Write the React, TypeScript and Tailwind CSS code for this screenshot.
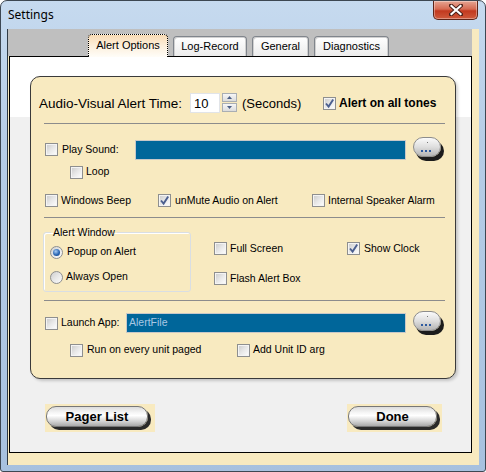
import React from "react";

function Box({ checked = false }: { checked?: boolean }) {
  return (
    <span className="flex h-[13px] w-[13px] shrink-0 items-center justify-center border border-[#8e8f8f] bg-[#f4f4f4] p-[1px]">
      <span className="relative flex h-full w-full items-center justify-center bg-gradient-to-br from-[#cfcfcf] via-[#e8e8e8] to-[#fbfbfb]">
        {checked && (
          <svg width="11" height="11" viewBox="0 0 11 11" className="absolute left-[-1px] top-[-1px]">
            <path d="M2 5.5 L4.6 8.6 L9.2 1.6" stroke="#4b5f8f" strokeWidth="1.9" fill="none" />
          </svg>
        )}
      </span>
    </span>
  );
}

function Radio({ on = false }: { on?: boolean }) {
  return (
    <span className="flex h-[13px] w-[13px] shrink-0 items-center justify-center rounded-full border border-[#8e8f8f] bg-gradient-to-br from-[#cfcfcf] via-[#e8e8e8] to-[#fbfbfb]">
      {on && (
        <span className="h-[7px] w-[7px] rounded-full bg-[radial-gradient(circle_at_40%_35%,#a8cdf5_0%,#2a66b4_55%,#0f3c78_100%)]" />
      )}
    </span>
  );
}

function Ellip() {
  return (
    <div className="h-[25px] w-[33px] shrink-0">
      <div className="relative h-[20px] w-[28px] rounded-[10px] border border-[#8c8c8c] bg-gradient-to-b from-[#fafafa] via-[#dedede] to-[#b4b4b4] shadow-[3px_4px_0_#1c1c1c]">
        <span className="absolute left-[13px] top-[4px] h-[1px] w-[1px] bg-[#777]" />
        <div className="absolute bottom-[4px] left-[7px] flex gap-[2px]">
          <span className="h-[2px] w-[2px] bg-[#2d5aa0]" />
          <span className="h-[2px] w-[2px] bg-[#2d5aa0]" />
          <span className="h-[2px] w-[2px] bg-[#2d5aa0]" />
        </div>
      </div>
    </div>
  );
}

function BigBtn({ label, w, face }: { label: string; w: string; face: string }) {
  return (
    <div className={`${w} h-[28px] bg-[#f8eac0] pl-[1px] pt-[2px]`}>
      <div
        className={`${face} flex h-[21px] items-center justify-center rounded-[10px] border border-[#777] bg-[linear-gradient(180deg,#dcdcdc_0%,#f6f6f6_30%,#ffffff_45%,#d4d4d4_75%,#a9a9a9_100%)] text-[13px] font-bold text-black shadow-[3px_3px_0_#2a2a2a]`}
      >
        {label}
      </div>
    </div>
  );
}

function Tab({ label, sel = false, w }: { label: string; sel?: boolean; w: string }) {
  if (sel) {
    return (
      <div
        className={`${w} relative z-10 mb-[-1px] flex h-[23px] items-start justify-center rounded-t-[4px] border border-b-0 border-dotted border-black bg-gradient-to-b from-[#f9dbb4] via-[#fcefdc] to-[#fffdf8] pt-[4px] text-[11px] leading-[13px]`}
      >
        {label}
      </div>
    );
  }
  return (
    <div
      className={`${w} flex h-[20px] items-start justify-center rounded-t-[4px] border border-b-0 border-[#80858c] bg-gradient-to-b from-[#ffffff] to-[#ececec] pt-[3px] text-[11px] leading-[13px] shadow-[inset_1px_1px_0_#d0d0d0,inset_-1px_0_0_#d0d0d0]`}
    >
      {label}
    </div>
  );
}

export default function App() {
  return (
    <div className="relative h-[472px] w-[486px] overflow-hidden rounded-t-[7px] rounded-b-[3px] border border-[#3d4752] bg-[linear-gradient(180deg,#c6daef_0%,#b6cde7_30%,#aec7e3_70%,#a7c1df_100%)] font-['Liberation_Sans',Arial,sans-serif] text-black">
      {/* title bar */}
      <div className="flex h-[28px] items-start justify-between">
        <span className="ml-[7px] mt-[6px] font-['Noto_Sans',sans-serif] text-[12px] leading-[16px] text-black">
          Settings
        </span>
        <div className="mr-[7px] flex h-[19px] w-[45px] items-center justify-center rounded-b-[5px] border border-t-0 border-[#5e2418] bg-[linear-gradient(180deg,#e6a593_0%,#d66a52_45%,#c2391f_55%,#cf5a3c_100%)] shadow-[inset_0_0_0_1px_rgba(255,255,255,0.35)]">
          <svg width="14" height="12" viewBox="0 0 14 12">
            <path d="M2 1.5 L12 10.5 M12 1.5 L2 10.5" stroke="#4a2018" strokeWidth="4" strokeLinecap="square" />
            <path d="M2.5 2 L11.5 10 M11.5 2 L2.5 10" stroke="#ffffff" strokeWidth="2.2" strokeLinecap="square" />
          </svg>
        </div>
      </div>

      {/* client area */}
      <div className="ml-[6px] flex h-[436px] w-[472px] flex-col border-l border-[#2f3a45] bg-[#f8eac0]">
        {/* tab strip */}
        <div className="flex h-[27px] w-[464px] items-end bg-[#bfbfbf] pl-[80px]">
          <Tab label="Alert Options" sel w="w-[80px]" />
          <div className="w-[5px]" />
          <Tab label="Log-Record" w="w-[74px]" />
          <div className="w-[5px]" />
          <Tab label="General" w="w-[57px]" />
          <div className="w-[5px]" />
          <Tab label="Diagnostics" w="w-[75px]" />
        </div>

        {/* panel */}
        <div className="ml-[1px] flex h-[397px] w-[463px] flex-col border border-black bg-[linear-gradient(180deg,#ffffff_0px,#ffffff_60px,#f0f0f0_60px,#f0f0f0_100%)]">
          {/* yellow box */}
          <div className="ml-[20px] mt-[19px] flex h-[303px] w-[426px] flex-col rounded-[10px] border border-[#3a3a3a] bg-[#f8eac0] text-[10.5px] shadow-[2px_2px_3px_rgba(0,0,0,0.18)]">
            {/* row 1 */}
            <div className="mt-[16px] flex h-[20px] items-center pl-[8px]">
              <span className="w-[151px] text-[13.5px] leading-[15px]">Audio-Visual Alert Time:</span>
              <div className="flex h-[20px] w-[30px] items-center border border-[#e1e4e8] bg-white pl-[3px] text-[13px] leading-[15px]">
                10
              </div>
              <div className="ml-[2px] flex h-[20px] w-[15px] flex-col gap-[1px]">
                <div className="flex h-[9px] items-center justify-center border border-[#a9aeb3] bg-gradient-to-b from-[#f6f6f6] to-[#dcdcdc]">
                  <svg width="5" height="3" viewBox="0 0 5 3">
                    <path d="M0 3 L2.5 0 L5 3 Z" fill="#4c5f86" />
                  </svg>
                </div>
                <div className="flex h-[9px] items-center justify-center border border-[#a9aeb3] bg-gradient-to-b from-[#f6f6f6] to-[#dcdcdc]">
                  <svg width="5" height="3" viewBox="0 0 5 3">
                    <path d="M0 0 L2.5 3 L5 0 Z" fill="#4c5f86" />
                  </svg>
                </div>
              </div>
              <span className="ml-[5px] w-[76px] text-[13px] leading-[15px]">(Seconds)</span>
              <span className="ml-[5px]">
                <Box checked />
              </span>
              <span className="ml-[3px] text-[12px] font-bold leading-[14px]">Alert on all tones</span>
            </div>

            <div className="ml-[13px] mt-[10px] h-[1px] w-[401px] bg-[#8c8c8c]" />

            {/* play sound */}
            <div className="mt-[14px] flex h-[23px] items-center">
              <span className="ml-[14px]">
                <Box />
              </span>
              <span className="ml-[4px] w-[73px]">Play Sound:</span>
              <div className="h-[20px] w-[271px] border border-[#c8c8c8] bg-[#00669a]" />
              <div className="ml-[7px]">
                <Ellip />
              </div>
            </div>

            {/* loop */}
            <div className="mt-[1px] flex h-[20px] items-center">
              <span className="ml-[39px]">
                <Box />
              </span>
              <span className="ml-[3px]">Loop</span>
            </div>

            {/* beep row */}
            <div className="mt-[8px] flex h-[21px] items-center">
              <span className="ml-[14px]">
                <Box />
              </span>
              <span className="ml-[3px] w-[97px]">Windows Beep</span>
              <Box checked />
              <span className="ml-[4px] w-[137px]">unMute Audio on Alert</span>
              <Box />
              <span className="ml-[3px]">Internal Speaker Alarm</span>
            </div>

            <div className="ml-[13px] mt-[6px] h-[1px] w-[401px] bg-[#8c8c8c]" />

            {/* alert window section */}
            <div className="mt-[8px] flex h-[66px]">
              <fieldset className="ml-[12px] h-[66px] w-[148px] rounded-[3px] border border-[#d9dee3] shadow-[inset_1px_1px_0_#ffffff]">
                <legend className="ml-[7px] px-[2px] text-[10.5px] leading-[13px]">Alert Window</legend>
                <div className="mt-[6px] flex h-[14px] items-center pl-[6px]">
                  <Radio on />
                  <span className="ml-[4px]">Popup on Alert</span>
                </div>
                <div className="mt-[11px] flex h-[14px] items-center pl-[6px]">
                  <Radio />
                  <span className="ml-[3px]">Always Open</span>
                </div>
              </fieldset>
              <div className="ml-[23px] flex w-[133px] flex-col pt-[16px]">
                <div className="flex h-[13px] items-center">
                  <Box />
                  <span className="ml-[3px]">Full Screen</span>
                </div>
                <div className="mt-[17px] flex h-[13px] items-center">
                  <Box />
                  <span className="ml-[3px]">Flash Alert Box</span>
                </div>
              </div>
              <div className="flex flex-col pt-[16px]">
                <div className="flex h-[13px] items-center">
                  <Box checked />
                  <span className="ml-[4px]">Show Clock</span>
                </div>
              </div>
            </div>

            <div className="ml-[13px] mt-[8px] h-[1px] w-[401px] bg-[#8c8c8c]" />

            {/* launch app */}
            <div className="mt-[9px] flex h-[26px] items-center">
              <span className="ml-[14px]">
                <Box />
              </span>
              <span className="ml-[3px] w-[65px]">Launch App:</span>
              <div className="flex h-[20px] w-[280px] items-center border border-[#c8c8c8] bg-[#00669a] pl-[2px] text-[10.5px] text-[#a9c8e4]">
                AlertFile
              </div>
              <div className="ml-[7px]">
                <Ellip />
              </div>
            </div>

            {/* run on every */}
            <div className="mt-[7px] flex h-[14px] items-center">
              <span className="ml-[39px]">
                <Box />
              </span>
              <span className="ml-[4px] w-[150px]">Run on every unit paged</span>
              <Box />
              <span className="ml-[3px]">Add Unit ID arg</span>
            </div>
          </div>

          {/* bottom buttons */}
          <div className="mt-[25px] flex">
            <div className="ml-[35px]">
              <BigBtn label="Pager List" w="w-[110px]" face="w-[102px]" />
            </div>
            <div className="ml-[192px]">
              <BigBtn label="Done" w="w-[95px]" face="w-[89px]" />
            </div>
          </div>
        </div>
      </div>
    </div>
  );
}
